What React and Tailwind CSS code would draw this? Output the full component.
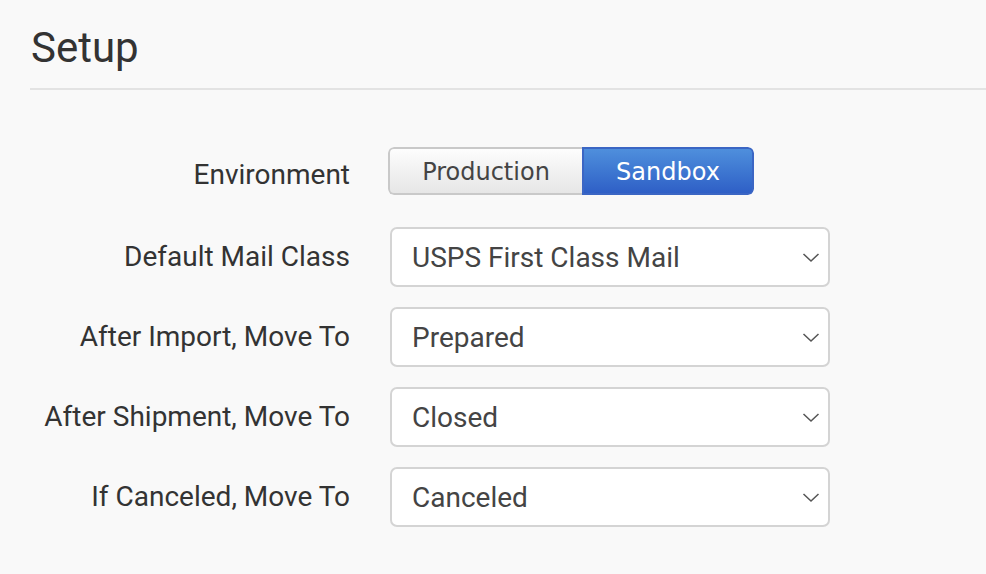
const rows = [
  { label: "Default Mail Class", value: "USPS First Class Mail" },
  { label: "After Import, Move To", value: "Prepared" },
  { label: "After Shipment, Move To", value: "Closed" },
  { label: "If Canceled, Move To", value: "Canceled" },
];

const Select = ({ value }) => (
  <div className="w-[440px] h-[60px] bg-white border-2 border-[#d4d4d4] rounded-[7px] flex items-center justify-between pl-[20px] pr-[8px]">
    <span className="text-[28px] leading-none text-[#444] mt-[2px]">{value}</span>
    <svg width="18" height="11" viewBox="0 0 18 11" className="mt-[1px]">
      <polyline points="1.5,2 9,9 16.5,2" fill="none" stroke="#555" strokeWidth="1.5" />
    </svg>
  </div>
);

export default function App() {
  return (
    <div
      className="w-[986px] h-[574px] bg-[#f9f9f9] pl-[30px] pt-[22px] overflow-hidden"
      style={{ fontFamily: "Roboto, 'Liberation Sans', sans-serif" }}
    >
      <h1 className="text-[42px] leading-[52px] text-[#333] pl-[1px]">Setup</h1>
      <div className="h-[2px] bg-[#e3e3e3] mt-[14px]"></div>

      <div className="mt-[57px] flex items-center">
        <div className="w-[320px] text-right text-[28px] leading-none text-[#333] mt-[8px]">Environment</div>
        <div
          className="ml-[38px] flex h-[48px] rounded-[6px] overflow-hidden"
          style={{ fontFamily: "'DejaVu Sans', Verdana, sans-serif" }}
        >
          <button className="w-[194px] h-full border-2 border-r-0 border-[#c9c9c9] rounded-l-[6px] bg-gradient-to-b from-[#fdfdfd] to-[#e6e6e6] text-[24px] text-[#444] pt-[2px]">
            Production
          </button>
          <button className="w-[172px] h-full border-2 border-[#3b66c4] rounded-r-[6px] bg-gradient-to-b from-[#4f8fdc] to-[#2f5fc6] text-[24px] text-white pt-[2px]">
            Sandbox
          </button>
        </div>
      </div>

      <div className="mt-[32px] flex flex-col gap-[20px]">
        {rows.map((r) => (
          <div key={r.label} className="flex items-center">
            <div className="w-[320px] text-right text-[28px] leading-none text-[#333]">{r.label}</div>
            <div className="ml-[40px]">
              <Select value={r.value} />
            </div>
          </div>
        ))}
      </div>
    </div>
  );
}
